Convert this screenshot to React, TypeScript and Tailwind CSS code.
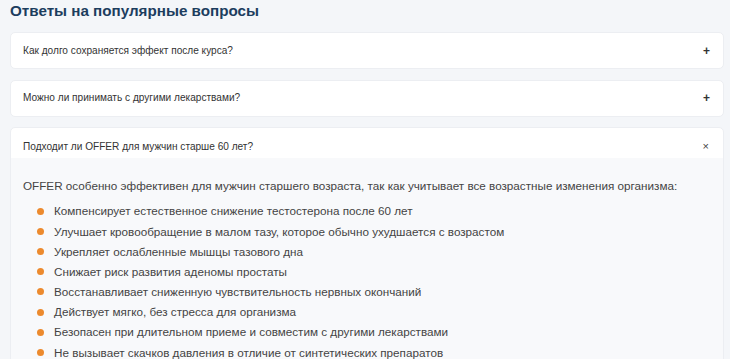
const faqs = [
  { q: "Как долго сохраняется эффект после курса?", open: false },
  { q: "Можно ли принимать с другими лекарствами?", open: false },
  { q: "Подходит ли OFFER для мужчин старше 60 лет?", open: true },
]

const points = [
  "Компенсирует естественное снижение тестостерона после 60 лет",
  "Улучшает кровообращение в малом тазу, которое обычно ухудшается с возрастом",
  "Укрепляет ослабленные мышцы тазового дна",
  "Снижает риск развития аденомы простаты",
  "Восстанавливает сниженную чувствительность нервных окончаний",
  "Действует мягко, без стресса для организма",
  "Безопасен при длительном приеме и совместим с другими лекарствами",
  "Не вызывает скачков давления в отличие от синтетических препаратов",
]

export default function App() {
  return (
    <div
      className="h-[359px] overflow-hidden bg-[#f4f6f9] px-[10px] text-[#333]"
      style={{ fontFamily: '"Liberation Sans", Arial, sans-serif' }}
    >
      <h2 className="text-[15.2px] leading-[22px] font-bold text-[#1c3d5e]">Ответы на популярные вопросы</h2>

      <div className="mt-[10px] flex w-[714px] flex-col gap-[10.5px]">
        {faqs.map((f) => (
          <div key={f.q} className="overflow-hidden rounded-[5px] border border-[#eceef2] bg-white">
            <div
              className={
                f.open
                  ? "flex h-[30px] items-center justify-between pt-[7px] pl-[12px] pr-[14px]"
                  : "flex h-[35px] items-center justify-between pl-[12px] pr-[13px]"
              }
            >
              <span className="text-[10.1px] text-[#333]">{f.q}</span>
              <span className={f.open ? "text-[11px] leading-none text-[#444]" : "text-[12px] font-bold leading-none text-[#333]"}>
                {f.open ? "×" : "+"}
              </span>
            </div>
            {f.open && (
              <div className="bg-[#f8f9fb] px-[12px] pt-[20px] pb-[20px]">
                <p className="text-[11.7px] leading-[16px] text-[#444]">
                  OFFER особенно эффективен для мужчин старшего возраста, так как учитывает все возрастные изменения организма:
                </p>
                <ul className="mt-[7px] flex flex-col">
                  {points.map((p) => (
                    <li key={p} className="flex h-[20.2px] items-center text-[11.7px] text-[#444]">
                      <span className="ml-[14px] mr-[10px] h-[7px] w-[7px] shrink-0 rounded-full bg-[#ec8a2e]" />
                      {p}
                    </li>
                  ))}
                </ul>
              </div>
            )}
          </div>
        ))}
      </div>
    </div>
  )
}
